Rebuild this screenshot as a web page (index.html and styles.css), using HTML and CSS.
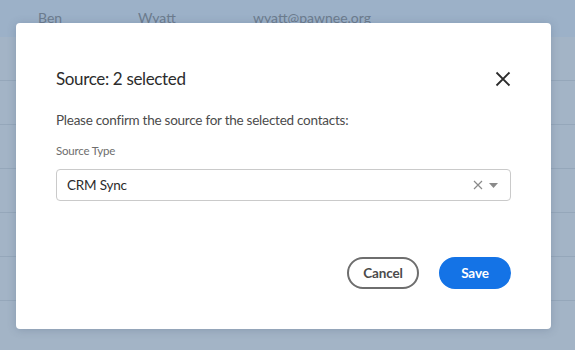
FILE: index.html
```html
<!DOCTYPE html>
<html lang="en">
<head>
  <meta charset="UTF-8" />
  <meta name="viewport" content="width=device-width, initial-scale=1.0" />
  <title>Contacts</title>
  <link rel="stylesheet" href="styles.css">
</head>
<body>
  <table class="contacts">
    <tr class="row active"><td>Ben</td><td>Wyatt</td><td>wyatt@pawnee.org</td></tr>
    <tr class="row"><td></td><td></td><td></td></tr>
    <tr class="row"><td></td><td></td><td></td></tr>
    <tr class="row"><td></td><td></td><td></td></tr>
    <tr class="row"><td></td><td></td><td></td></tr>
    <tr class="row"><td></td><td></td><td></td></tr>
    <tr class="row"><td></td><td></td><td></td></tr>
  </table>

  <div class="dialog">
    <div class="dialog-header">
      <h2>Source: 2 selected</h2>
      <button class="close" aria-label="Close">
        <svg width="16" height="16" viewBox="0 0 16 16"><path d="M1.5 1.5l13 13M14.5 1.5l-13 13" stroke="#2c2c2c" stroke-width="1.8" fill="none"/></svg>
      </button>
    </div>
    <p class="intro">Please confirm the source for the selected contacts:</p>
    <label class="field-label">Source Type</label>
    <div class="select">
      <span class="value">CRM Sync</span>
      <span class="clear">
        <svg width="10" height="10" viewBox="0 0 10 10"><path d="M1 1l8 8M9 1l-8 8" stroke="#8a8a8a" stroke-width="1.2" fill="none"/></svg>
      </span>
      <span class="caret">
        <svg width="9" height="5" viewBox="0 0 9 5"><path d="M0 0h9L4.5 5z" fill="#8a8a8a"/></svg>
      </span>
    </div>
    <div class="dialog-footer">
      <button class="btn secondary">Cancel</button>
      <button class="btn primary">Save</button>
    </div>
  </div>
</body>
</html>
```

FILE: styles.css
```css
body {
  margin: 0;
  background: #a3b4c6;
  font-family: 'Lato', 'Open Sans', sans-serif;
  overflow: hidden;
}

.contacts {
  width: 100%;
  border-collapse: collapse;
  font-size: 14px;
  color: #6c7c8e;
}

.row td {
  height: 43px;
  border-bottom: 1px solid #95a7ba;
  padding: 0;
}

.row td:nth-child(1) { width: 100px; padding-left: 38px; }
.row td:nth-child(2) { width: 115px; }

.row.active td {
  height: 35px;
  padding-bottom: 2px;
  background: #9cb1c8;
  border-bottom: none;
}

.dialog {
  position: absolute;
  left: 16px;
  top: 23px;
  width: 535px;
  height: 306px;
  box-sizing: border-box;
  padding: 40px 40px;
  background: #fff;
  border-radius: 4px;
  box-shadow: 0 1px 8px rgba(60, 80, 110, 0.25);
  display: flex;
  flex-direction: column;
}

.dialog-header {
  display: flex;
  align-items: center;
  justify-content: space-between;
}

.dialog-header h2 {
  margin: 0;
  font-size: 17px;
  letter-spacing: -0.35px;
  font-weight: 400;
  color: #2c2c2c;
  line-height: 32px;
}

.close {
  background: none;
  border: none;
  padding: 0;
  display: flex;
  cursor: pointer;
}

.intro {
  margin: 15px 0 0;
  font-size: 13.5px;
  letter-spacing: -0.25px;
  line-height: 20px;
  color: #4b4b4b;
}

.field-label {
  margin-top: 12px;
  font-size: 11.5px;
  letter-spacing: -0.2px;
  line-height: 18px;
  color: #6e6e6e;
}

.select {
  margin-top: 9px;
  height: 32px;
  box-sizing: border-box;
  border: 1px solid #cacaca;
  border-radius: 4px;
  display: flex;
  align-items: center;
  padding: 0 12px 0 10px;
  font-size: 13.5px;
  letter-spacing: -0.2px;
  color: #2c2c2c;
}

.select .value { flex: 1; }

.select .clear { display: flex; margin-right: 6px; }
.select .caret { display: flex; }

.dialog-footer {
  margin-top: auto;
  display: flex;
  justify-content: flex-end;
  gap: 20px;
}

.btn {
  width: 72px;
  height: 32px;
  border-radius: 16px;
  font-family: inherit;
  font-size: 13.5px;
  letter-spacing: -0.1px;
  font-weight: 700;
  cursor: pointer;
}

.btn.secondary {
  background: #fff;
  border: 2px solid #6e6e6e;
  color: #4b4b4b;
}

.btn.primary {
  background: #1473e6;
  border: 2px solid #1473e6;
  color: #fff;
}
```
